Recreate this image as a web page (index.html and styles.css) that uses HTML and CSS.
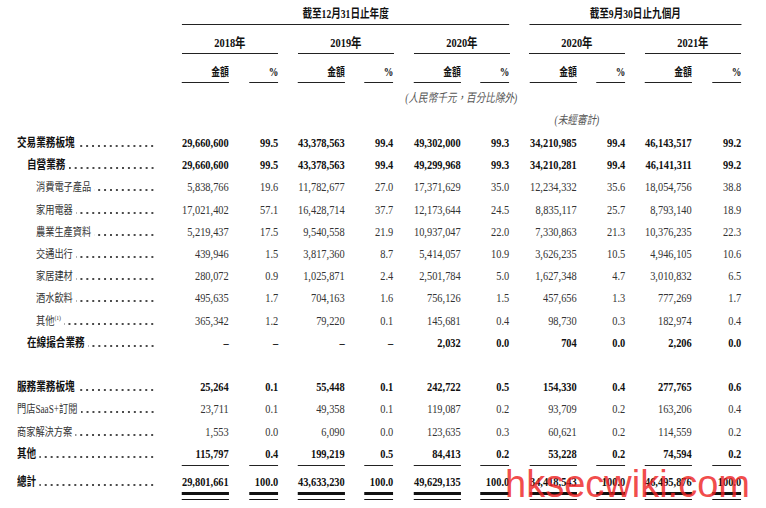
FILE: index.html
```html
<!DOCTYPE html>
<html lang="zh-Hant">
<head>
<meta charset="utf-8">
<title>收入明細</title>
<link rel="stylesheet" href="styles.css">
</head>
<body>
<div class="sheet">
  <div class="row head-period">
    <div class="period span-a">截至12月31日止年度</div>
    <div class="period span-b">截至9月30日止九個月</div>
  </div>
  <div class="row head-year">
    <div class="year first">2018年</div>
    <div class="year">2019年</div>
    <div class="year">2020年</div>
    <div class="year">2020年</div>
    <div class="year">2021年</div>
  </div>
  <div class="row head-col">
    <div class="colhead amt first">金額</div><div class="colhead pct">%</div>
    <div class="colhead amt">金額</div><div class="colhead pct">%</div>
    <div class="colhead amt">金額</div><div class="colhead pct">%</div>
    <div class="colhead amt">金額</div><div class="colhead pct">%</div>
    <div class="colhead amt">金額</div><div class="colhead pct">%</div>
  </div>
  <div class="note">(人民幣千元，百分比除外)</div>
  <div class="unaudited">(未經審計)</div>

  <div class="row bold">
    <div class="label"><span class="txt">交易業務板塊</span><span class="dots"></span></div>
    <div class="n">29,660,600</div><div class="n">99.5</div><div class="n">43,378,563</div><div class="n">99.4</div><div class="n">49,302,000</div><div class="n">99.3</div><div class="n">34,210,985</div><div class="n">99.4</div><div class="n">46,143,517</div><div class="n">99.2</div>
  </div>
  <div class="row bold">
    <div class="label l1"><span class="txt">自營業務</span><span class="dots"></span></div>
    <div class="n">29,660,600</div><div class="n">99.5</div><div class="n">43,378,563</div><div class="n">99.4</div><div class="n">49,299,968</div><div class="n">99.3</div><div class="n">34,210,281</div><div class="n">99.4</div><div class="n">46,141,311</div><div class="n">99.2</div>
  </div>
  <div class="row">
    <div class="label l2"><span class="txt">消費電子產品</span><span class="dots"></span></div>
    <div class="n">5,838,766</div><div class="n">19.6</div><div class="n">11,782,677</div><div class="n">27.0</div><div class="n">17,371,629</div><div class="n">35.0</div><div class="n">12,234,332</div><div class="n">35.6</div><div class="n">18,054,756</div><div class="n">38.8</div>
  </div>
  <div class="row">
    <div class="label l2"><span class="txt">家用電器</span><span class="dots"></span></div>
    <div class="n">17,021,402</div><div class="n">57.1</div><div class="n">16,428,714</div><div class="n">37.7</div><div class="n">12,173,644</div><div class="n">24.5</div><div class="n">8,835,117</div><div class="n">25.7</div><div class="n">8,793,140</div><div class="n">18.9</div>
  </div>
  <div class="row">
    <div class="label l2"><span class="txt">農業生產資料</span><span class="dots"></span></div>
    <div class="n">5,219,437</div><div class="n">17.5</div><div class="n">9,540,558</div><div class="n">21.9</div><div class="n">10,937,047</div><div class="n">22.0</div><div class="n">7,330,863</div><div class="n">21.3</div><div class="n">10,376,235</div><div class="n">22.3</div>
  </div>
  <div class="row">
    <div class="label l2"><span class="txt">交通出行</span><span class="dots"></span></div>
    <div class="n">439,946</div><div class="n">1.5</div><div class="n">3,817,360</div><div class="n">8.7</div><div class="n">5,414,057</div><div class="n">10.9</div><div class="n">3,626,235</div><div class="n">10.5</div><div class="n">4,946,105</div><div class="n">10.6</div>
  </div>
  <div class="row">
    <div class="label l2"><span class="txt">家居建材</span><span class="dots"></span></div>
    <div class="n">280,072</div><div class="n">0.9</div><div class="n">1,025,871</div><div class="n">2.4</div><div class="n">2,501,784</div><div class="n">5.0</div><div class="n">1,627,348</div><div class="n">4.7</div><div class="n">3,010,832</div><div class="n">6.5</div>
  </div>
  <div class="row">
    <div class="label l2"><span class="txt">酒水飲料</span><span class="dots"></span></div>
    <div class="n">495,635</div><div class="n">1.7</div><div class="n">704,163</div><div class="n">1.6</div><div class="n">756,126</div><div class="n">1.5</div><div class="n">457,656</div><div class="n">1.3</div><div class="n">777,269</div><div class="n">1.7</div>
  </div>
  <div class="row">
    <div class="label l2"><span class="txt">其他<sup class="fn">(1)</sup></span><span class="dots"></span></div>
    <div class="n">365,342</div><div class="n">1.2</div><div class="n">79,220</div><div class="n">0.1</div><div class="n">145,681</div><div class="n">0.4</div><div class="n">98,730</div><div class="n">0.3</div><div class="n">182,974</div><div class="n">0.4</div>
  </div>
  <div class="row bold">
    <div class="label l1"><span class="txt">在線撮合業務</span><span class="dots"></span></div>
    <div class="n">–</div><div class="n">–</div><div class="n">–</div><div class="n">–</div><div class="n">2,032</div><div class="n">0.0</div><div class="n">704</div><div class="n">0.0</div><div class="n">2,206</div><div class="n">0.0</div>
  </div>

  <div class="spacer"></div>

  <div class="row bold">
    <div class="label"><span class="txt">服務業務板塊</span><span class="dots"></span></div>
    <div class="n">25,264</div><div class="n">0.1</div><div class="n">55,448</div><div class="n">0.1</div><div class="n">242,722</div><div class="n">0.5</div><div class="n">154,330</div><div class="n">0.4</div><div class="n">277,765</div><div class="n">0.6</div>
  </div>
  <div class="row">
    <div class="label"><span class="txt">門店SaaS+訂閱</span><span class="dots"></span></div>
    <div class="n">23,711</div><div class="n">0.1</div><div class="n">49,358</div><div class="n">0.1</div><div class="n">119,087</div><div class="n">0.2</div><div class="n">93,709</div><div class="n">0.2</div><div class="n">163,206</div><div class="n">0.4</div>
  </div>
  <div class="row">
    <div class="label"><span class="txt">商家解決方案</span><span class="dots"></span></div>
    <div class="n">1,553</div><div class="n">0.0</div><div class="n">6,090</div><div class="n">0.0</div><div class="n">123,635</div><div class="n">0.3</div><div class="n">60,621</div><div class="n">0.2</div><div class="n">114,559</div><div class="n">0.2</div>
  </div>
  <div class="row bold subtotal">
    <div class="label"><span class="txt">其他</span><span class="dots"></span></div>
    <div class="n">115,797</div><div class="n">0.4</div><div class="n">199,219</div><div class="n">0.5</div><div class="n">84,413</div><div class="n">0.2</div><div class="n">53,228</div><div class="n">0.2</div><div class="n">74,594</div><div class="n">0.2</div>
  </div>
  <div class="row bold total">
    <div class="label"><span class="txt">總計</span><span class="dots"></span></div>
    <div class="n">29,801,661</div><div class="n">100.0</div><div class="n">43,633,230</div><div class="n">100.0</div><div class="n">49,629,135</div><div class="n">100.0</div><div class="n">34,418,543</div><div class="n">100.0</div><div class="n">46,495,876</div><div class="n">100.0</div>
  </div>
</div>
<div class="watermark">hksecwiki.com</div>
</body>
</html>
```

FILE: styles.css
```css
html, body {
  margin: 0;
  padding: 0;
  overflow: hidden;
  background: #fff;
}

body {
  position: relative;
  width: 766px;
  height: 508px;
  font-family: "Liberation Serif", "Noto Sans CJK TC", serif;
  color: #333;
}

.sheet {
  padding-left: 17px;
  display: grid;
  grid-template-columns: 145.125px repeat(5, 47px 29px);
  column-gap: 19.875px;
  font-size: 13px;
}

.row {
  display: contents;
}

/* The printed table uses a condensed face: every cell is set 25% wider
   and squeezed back into its column. */
.period, .year, .colhead, .note, .unaudited, .label, .n {
  box-sizing: border-box;
  width: 125%;
  transform: scaleX(0.8);
}
.n, .colhead {
  margin-left: -25%;
  transform-origin: 100% 0;
}
.label {
  transform-origin: 0 0;
}
.period, .year, .note, .unaudited {
  margin-left: -12.5%;
  transform-origin: 50% 0;
}

/* ---------- header ---------- */
.period {
  padding-top: 4px;
  line-height: 20px;
  border-bottom: 1px solid #222;
  text-align: center;
  font-size: 12px;
  font-weight: bold;
  color: #111;
}
.span-a { grid-column: 2 / 8; }
.span-b { grid-column: 8 / 12; }

.year {
  grid-column: span 2;
  padding-top: 8px;
  line-height: 20px;
  border-bottom: 1px solid #222;
  text-align: center;
  font-weight: bold;
  color: #111;
}
.year.first { grid-column: 2 / span 2; }

.colhead {
  padding-top: 8px;
  line-height: 20px;
  border-bottom: 1px solid #222;
  text-align: right;
  font-weight: bold;
  color: #111;
}
.colhead.amt { font-size: 11px; }
.colhead.pct { font-size: 12px; }
.colhead.first { grid-column: 2; }

.note {
  grid-column: 2 / 12;
  padding-top: 5px;
  line-height: 20px;
  text-align: center;
  font-size: 12px;
  font-style: italic;
  color: #555;
}

.unaudited {
  grid-column: 8 / 10;
  padding: 2px 0;
  line-height: 20px;
  text-align: center;
  font-size: 12px;
  font-style: italic;
  color: #555;
}

/* ---------- body rows ---------- */
.label {
  grid-column: 1;
  display: flex;
  align-items: baseline;
  padding-right: 8.75px;
  line-height: 22.2px;
  white-space: nowrap;
  font-size: 11.5px;
}
.bold .label { font-size: 12px; }
.label.l1 { padding-left: 12.5px; }
.label.l2 { padding-left: 23.75px; }

.txt {
  flex: none;
}

.fn {
  font-size: 7px;
  line-height: 0;
  vertical-align: 5px;
  font-family: "Liberation Serif", serif;
}

/* dot leader */
.dots {
  flex: 1;
  min-width: 0;
  height: 2px;
  margin-left: 4px;
  background-image: radial-gradient(circle at center, #4a4a4a 0 0.8px, transparent 1.05px);
  background-size: 7.4px 2px;
  background-repeat: repeat-x;
  background-position: right bottom;
}

.n {
  line-height: 22.2px;
  text-align: right;
}

.bold {
  font-weight: bold;
  color: #111;
}

.spacer {
  grid-column: 1 / -1;
  height: 22.2px;
}

.subtotal .n {
  border-bottom: 1px solid #222;
}

.total > div {
  padding-top: 7px;
  padding-bottom: 9px;
  line-height: 18px;
}

.total .n {
  background:
    linear-gradient(#111, #111) left 0 bottom 0 / 100% 1px no-repeat,
    linear-gradient(#111, #111) left 0 bottom 5px / 100% 3px no-repeat;
}

/* ---------- watermark over the totals ---------- */
.watermark {
  position: absolute;
  left: 505px;
  top: 465px;
  font-family: "Liberation Sans", Arial, sans-serif;
  font-size: 38px;
  line-height: 38px;
  color: rgba(238, 36, 36, 0.82);
  white-space: nowrap;
}
```
